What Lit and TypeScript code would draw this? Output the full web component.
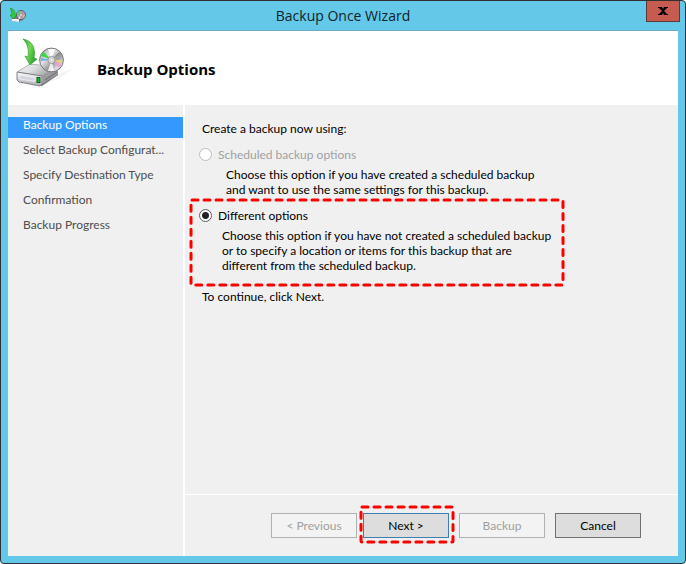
import { LitElement, html, css, svg } from "lit";
import { customElement, property } from "lit/decorators.js";

const driveArt = svg`
  <defs>
    <linearGradient id="arrow" x1="0" y1="0" x2="1" y2="0.6">
      <stop offset="0" stop-color="#2fa636" /><stop offset="0.5" stop-color="#74dc52" /><stop offset="1" stop-color="#28a032" />
    </linearGradient>
    <linearGradient id="top" x1="0" y1="0" x2="1" y2="0.4">
      <stop offset="0" stop-color="#f1f1f2" /><stop offset="0.5" stop-color="#dcdddf" /><stop offset="1" stop-color="#9a9b9e" />
    </linearGradient>
    <linearGradient id="front" x1="0" y1="0" x2="0" y2="1">
      <stop offset="0" stop-color="#fbfbfc" /><stop offset="1" stop-color="#a9abb2" />
    </linearGradient>
    <linearGradient id="disc" x1="0" y1="0" x2="1" y2="1">
      <stop offset="0" stop-color="#8f9092" /><stop offset="0.35" stop-color="#e6e6e6" /><stop offset="0.6" stop-color="#9a9b9d" /><stop offset="0.8" stop-color="#e6e0e6" /><stop offset="1" stop-color="#858387" />
    </linearGradient>
  </defs>
  <path d="M26 47 L44 35 L57 31 L44 40 Z" fill="#f4f4f4" />
  <path d="M1 34 L14 26 L42 29 L42 37 L26 48 L3 43 Z" fill="#77787c" />
  <path d="M1 34 L14 26 L42 29 L26 38 Z" fill="url(#top)" stroke="#a3a4a8" stroke-width="0.6" />
  <path d="M1 34 L26 38 L26 46 L24 48 L3 44 L1 42 Z" fill="url(#front)" stroke="#76787e" stroke-width="0.9" />
  <path d="M3 37 L19 39.500 L19 43.500 L4 41 Z" fill="#d3d4dd" stroke="#f7f7fa" stroke-width="0.7" />
  <path d="M26 38 L42 29 L42 36 L26 46 Z" fill="#9b9c9f" />
  <path d="M29 42 L41 34" stroke="#77787b" stroke-width="1.500" />
  <rect x="21" y="39.500" width="3" height="5" fill="#12c322" stroke="#174c1b" stroke-width="0.9" />
  <circle cx="35.500" cy="22" r="11.900" fill="url(#disc)" stroke="#77787a" stroke-width="1" />
  <path d="M35.500 22 L25 18 A12 12 0 0 1 28 14 Z" fill="#1fdc30" opacity="0.85" />
  <path d="M35.500 22 L25 20 L25 23 Z" fill="#4ba8e8" opacity="0.8" />
  <path d="M35.500 22 L32 11 L39 11 Z" fill="#ffffff" opacity="0.85" />
  <path d="M35.500 22 L43 14 L45 16 Z" fill="#77787a" opacity="0.6" />
  <path d="M35.500 22 L46 22 L46 26 Z" fill="#f0d468" opacity="0.8" />
  <path d="M35.500 22 L46 26 L43 30 Z" fill="#ee9ad6" opacity="0.8" />
  <path d="M35.500 22 L38 33 L32 33 Z" fill="#ffffff" opacity="0.8" />
  <circle cx="35.500" cy="22" r="3.600" fill="#d8d8da" stroke="#8f8f92" stroke-width="0.8" />
  <circle cx="35.500" cy="22" r="1.300" fill="#ffffff" stroke="#aaaaaa" stroke-width="0.4" />
  <path d="M7 1 C16 3 20 9 18 20 L21 21 L14 27 L9 18 L12 19 C13 12 12 6 7 1 Z" fill="url(#arrow)" stroke="#33a239" stroke-width="0.7" stroke-linejoin="round" />
`;

const smallArt = svg`
  <path d="M2 11 L5 9 L13 10 L13 13 L9 15 L2 14 Z" fill="#77797c" />
  <path d="M2 12 L9 12 L9 15 L2 14 Z" fill="#f3f3f5" />
  <circle cx="11" cy="8" r="4.600" fill="#a99fa9" stroke="#5a5d64" stroke-width="0.9" />
  <path d="M11 8 L7 6 L9 4 Z" fill="#56d46a" />
  <path d="M11 8 L15 8 L14 11 Z" fill="#e8b58e" />
  <path d="M11 8 L10 12 L8 11 Z" fill="#e9e4ee" />
  <circle cx="11" cy="8" r="1.400" fill="#f4f4f4" stroke="#77797e" stroke-width="0.6" />
  <path d="M0 1 C4 2 5 4 5 8 L7 8 L3 12 L0 8 L2 8 C2 5 1 3 0 1 Z" fill="#2fd03a" stroke="#178a26" stroke-width="0.6" />
`;

@customElement("drive-icon")
export class DriveIcon extends LitElement {
  @property({ type: Boolean }) compact = false;
  static styles = css`
    :host { display: block; flex: none; }
    svg { display: block; width: 100%; height: 100%; }
  `;
  render() {
    return this.compact
      ? html`<svg viewBox="0 0 16 16" aria-hidden="true">${smallArt}</svg>`
      : html`<svg viewBox="0 0 58 50" aria-hidden="true">${driveArt}</svg>`;
  }
}

@customElement("dashed-frame")
export class DashedFrame extends LitElement {
  static styles = css`
    :host { position: absolute; pointer-events: none; }
    svg { display: block; width: 100%; height: 100%; overflow: visible; }
    rect { fill: none; stroke: #ff0000; stroke-width: 3; stroke-dasharray: 6 6; stroke-linecap: round; }
  `;
  render() {
    return html`<svg aria-hidden="true"><rect width="100%" height="100%" rx="1"></rect></svg>`;
  }
}

@customElement("wizard-steps")
export class WizardSteps extends LitElement {
  @property({ type: Array }) steps: string[] = [];
  static styles = css`
    :host { display: block; }
    ol { list-style: none; margin: 0; padding: 12px 0 0; }
    li { height: 25px; }
    a {
      display: block; padding: 0 15px; height: 21px; line-height: 16px;
      color: #4d4d4d; text-decoration: none; white-space: nowrap;
    }
    .current { background: #3399ff; color: #fff; }
  `;
  render() {
    return html`<ol>
      ${this.steps.map(
        (step, i) => html`<li><a href="#" class=${i === 0 ? "current" : "step"}>${step}</a></li>`
      )}
    </ol>`;
  }
}

@customElement("app-root")
export class AppRoot extends LitElement {
  static styles = css`
    :host {
      display: block;
      font: 12px/15px Lato, "Open Sans", sans-serif;
      color: #000;
    }
    * { box-sizing: border-box; }
    .window {
      display: flex; flex-direction: column; min-height: 100vh;
      border: 1px solid #2f3033; border-radius: 4px;
      background: #64c8e8; padding: 0 7px 7px;
    }
    .titlebar {
      display: grid; grid-template-columns: 48px 1fr 48px;
      height: 30px; border-bottom: 1px solid #6fa9c4; flex: none;
    }
    .small { width: 16px; height: 16px; margin: 6px 2px; }
    .title { margin: 0; font: 14px/29px "Open Sans", sans-serif; text-align: center; color: #10242c; }
    .close {
      justify-self: end; width: 34px; height: 21px; margin: 0 -2px 0 0; padding: 0;
      border: 1px solid #5b3a3a; border-top: 0; background: #c75b50;
      display: grid; place-items: center;
    }
    .close svg { width: 10px; height: 8px; display: block; }
    .header {
      display: flex; align-items: center; height: 74px; flex: none;
      background: #fff; padding: 0 8px; gap: 23px;
    }
    .large { width: 58px; height: 50px; margin-bottom: 10px; }
    .header h2 { margin: 2px 0 0; font: 700 15px/20px "Open Sans", sans-serif; }
    .main { flex: 1; display: grid; grid-template-columns: 175px 1fr; gap: 2px; background: #fff; }
    .main > * { background: #f0f0f0; }
    .page { display: flex; flex-direction: column; }
    .content { flex: 1; padding: 16px 17px; }
    .content p { margin: 0; }
    .option { position: relative; margin-top: 10px; }
    .radio { display: flex; align-items: center; gap: 6px; height: 16px; margin-left: -3px; }
    .radio input {
      appearance: none; width: 13px; height: 13px; margin: 0; border-radius: 50%;
      border: 1px solid #606060; background: #fff;
    }
    .radio input:checked { background: radial-gradient(circle, #222 3px, #fff 4px); }
    .radio input:disabled { border-color: #bcbcbc; }
    .off { color: #a0a0a0; }
    .content .hint { margin: 5px 0 0 24px; white-space: nowrap; }
    .content .near { margin-left: 20px; }
    .around { left: -11px; top: -7px; width: 372px; height: 85px; }
    .content .last { margin-top: 16px; }
    .footer {
      display: flex; justify-content: flex-end; gap: 10px;
      border-top: 1px solid #fff; padding: 18px 37px;
    }
    .pair { display: flex; gap: 6px; }
    .slot { position: relative; }
    .halo { left: -2px; top: -6px; width: 92px; height: 35px; }
    .btn {
      display: block; width: 86px; height: 25px; padding: 0; font: inherit; color: #000;
      background: #dddddd; border: 1px solid #707070;
    }
    .btn:disabled { color: #a0a0a0; background: #f3f3f3; border-color: #adb2b5; }
    .default { border-color: #3c7fb1; }
  `;

  private steps = [
    "Backup Options",
    "Select Backup Configurat...",
    "Specify Destination Type",
    "Confirmation",
    "Backup Progress",
  ];

  render() {
    return html`
      <div class="window">
        <header class="titlebar">
          <drive-icon class="small" compact></drive-icon>
          <h1 class="title">Backup Once Wizard</h1>
          <button class="close" aria-label="Close">
            <svg viewBox="0 0 10 8"><path d="M0 0H4L5 2L6 0H10V1H9L6 4L9 7H10V8H6L5 6L4 8H0V7H1L4 4L1 1H0Z" /></svg>
          </button>
        </header>
        <div class="header">
          <drive-icon class="large"></drive-icon>
          <h2>Backup Options</h2>
        </div>
        <div class="main">
          <wizard-steps .steps=${this.steps}></wizard-steps>
          <main class="page">
            <div class="content">
              <p>Create a backup now using:</p>
              <div class="option">
                <label class="radio off"><input type="radio" name="mode" disabled />Scheduled backup options</label>
                <p class="hint">Choose this option if you have created a scheduled backup<br />and want to use the same settings for this backup.</p>
              </div>
              <div class="option">
                <label class="radio"><input type="radio" name="mode" checked />Different options</label>
                <p class="hint near">Choose this option if you have not created a scheduled backup<br />or to specify a location or items for this backup that are<br />different from the scheduled backup.</p>
                <dashed-frame class="around"></dashed-frame>
              </div>
              <p class="last">To continue, click Next.</p>
            </div>
            <footer class="footer">
              <div class="pair">
                <button class="btn" disabled>&lt; Previous</button>
                <div class="slot">
                  <button class="btn default">Next &gt;</button>
                  <dashed-frame class="halo"></dashed-frame>
                </div>
              </div>
              <button class="btn" disabled>Backup</button>
              <button class="btn">Cancel</button>
            </footer>
          </main>
        </div>
      </div>
    `;
  }
}
